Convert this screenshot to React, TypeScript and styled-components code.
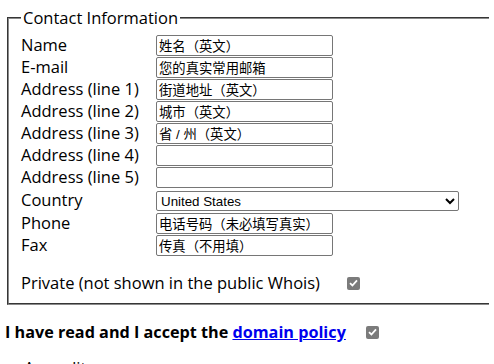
import React from "react";
import styled, { createGlobalStyle } from "styled-components";

const Global = createGlobalStyle`
  body {
    margin: 7px 5px 0;
    font-family: "Open Sans", "Noto Sans CJK SC", sans-serif;
    font-size: 16.5px;
    color: #000;
    background: #fff;
    overflow: hidden;
  }
`;

const Fieldset = styled.fieldset`
  margin: 0 2px;
  padding: 5px 12px 9px;
  width: 540px;
  border: 2px groove #c0c0c0;
  border-top-color: #8a8a8a;
  border-left-color: #8a8a8a;
  border-bottom-color: #8a8a8a;
`;

const Legend = styled.legend`
  padding: 0 2px;
  line-height: 22px;
`;

const Row = styled.div<{ $h?: number }>`
  display: flex;
  align-items: center;
  height: ${(p) => p.$h || 22}px;
`;

const Label = styled.span`
  width: 135px;
  line-height: 22px;
  white-space: nowrap;
`;

const Input = styled.input`
  box-sizing: border-box;
  width: 177px;
  height: 21px;
  margin: 0;
  padding: 1px 2px;
  border: 1px solid #767676;
  border-radius: 2px;
  font-family: "Liberation Sans", "Noto Sans CJK SC", sans-serif;
  font-size: 13.33px;
  color: #000;
  background: #fff;
`;

const Select = styled.select`
  box-sizing: border-box;
  width: 303px;
  height: 20px;
  margin: 2px 0 0;
  padding: 0;
  border: 1px solid #767676;
  border-radius: 2px;
  font-family: "Liberation Sans", sans-serif;
  font-size: 13.33px;
  color: #000;
  background: #fff;
`;

const Spacer = styled.div`
  height: 16px;
`;

const Box = styled.span<{ $ml: number }>`
  display: inline-flex;
  align-items: center;
  justify-content: center;
  width: 13px;
  height: 13px;
  margin-left: ${(p) => p.$ml}px;
  border-radius: 2px;
  background: #7b7b7b;
  flex: none;
`;

const PrivateText = styled.span`
  line-height: 22px;
`;

const Accept = styled.div`
  display: flex;
  align-items: center;
  margin-top: 16px;
  font-weight: bold;
  font-size: 16.2px;
  line-height: 22px;
`;

const Link = styled.a`
  color: #0000ee;
  text-decoration: underline;
`;

const Next = styled.div`
  margin: 14px 0 0 19px;
  line-height: 22px;
`;

function Checkbox({ ml }: { ml: number }) {
  return (
    <Box $ml={ml} role="checkbox" aria-checked="true">
      <svg width="9" height="8" viewBox="0 0 9 8">
        <path d="M1 4.2 L3.4 6.5 L8 1.3" fill="none" stroke="#fff" strokeWidth="1.8" />
      </svg>
    </Box>
  );
}

const rows: [string, string][] = [
  ["Name", "姓名（英文）"],
  ["E-mail", "您的真实常用邮箱"],
  ["Address (line 1)", "街道地址（英文）"],
  ["Address (line 2)", "城市（英文）"],
  ["Address (line 3)", "省 / 州（英文）"],
  ["Address (line 4)", ""],
  ["Address (line 5)", ""],
];

export default function App() {
  return (
    <>
      <Global />
      <Fieldset>
        <Legend>Contact Information</Legend>
        {rows.map(([l, v]) => (
          <Row key={l}>
            <Label>{l}</Label>
            <Input defaultValue={v} />
          </Row>
        ))}
        <Row $h={24}>
          <Label>Country</Label>
          <Select defaultValue="US">
            <option value="US">United States</option>
          </Select>
        </Row>
        <Row>
          <Label>Phone</Label>
          <Input defaultValue="电话号码（未必填写真实）" />
        </Row>
        <Row>
          <Label>Fax</Label>
          <Input defaultValue="传真（不用填）" />
        </Row>
        <Spacer />
        <Row>
          <PrivateText>Private (not shown in the public Whois)</PrivateText>
          <Checkbox ml={27} />
        </Row>
      </Fieldset>
      <Accept>
        <span>
          I have read and I accept the <Link href="#">domain policy</Link>
        </span>
        <Checkbox ml={20} />
      </Accept>
      <Next>Accredit</Next>
    </>
  );
}
